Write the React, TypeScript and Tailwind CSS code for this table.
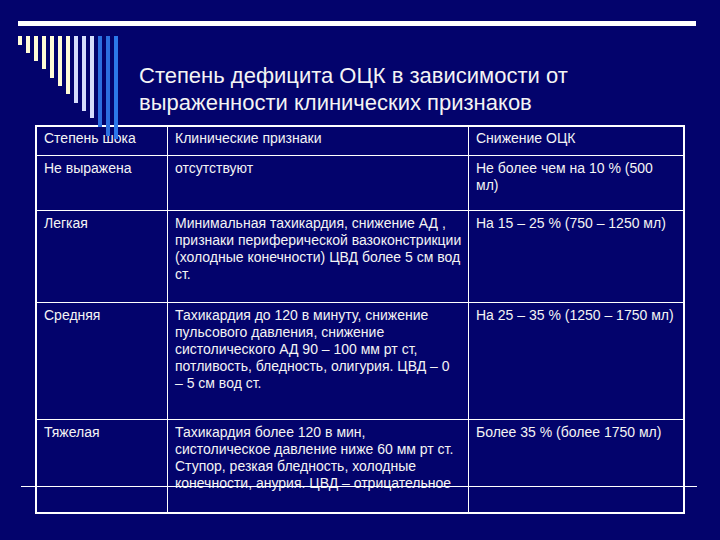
const bars = [
  'h-[9px] bg-[#fffbd6]',
  'h-[17px] bg-[#fffbd6]',
  'h-[25px] bg-[#fffbd6]',
  'h-[33px] bg-[#fffbd6]',
  'h-[42px] bg-[#fffbd6]',
  'h-[50px] bg-[#fffbd6]',
  'h-[58px] bg-[#fffbd6]',
  'h-[67px] bg-[#d6dcfb]',
  'h-[75px] bg-[#d6dcfb]',
  'h-[82px] bg-[#d6dcfb]',
  'h-[91px] bg-[#2c6fe0]',
  'h-[100px] bg-[#2c6fe0]',
  'h-[103px] bg-[#2c78ea]',
]

const rows: { h: string; pt: string; cells: string[][] }[] = [
  { h: 'h-[28px]', pt: 'pt-[3px]', cells: [['Степень шока'], ['Клинические признаки'], ['Снижение ОЦК']] },
  {
    h: 'h-[55px] border-t',
    pt: 'pt-[4px]',
    cells: [['Не выражена'], ['отсутствуют'], ['Не более чем на 10 % (500', 'мл)']],
  },
  {
    h: 'h-[92px] border-t',
    pt: 'pt-[4px]',
    cells: [
      ['Легкая'],
      [
        'Минимальная тахикардия, снижение АД ,',
        'признаки периферической вазоконстрикции',
        '(холодные конечности) ЦВД более 5 см вод',
        'ст.',
      ],
      ['На 15 – 25 % (750 – 1250 мл)'],
    ],
  },
  {
    h: 'h-[117px] border-t',
    pt: 'pt-[4px]',
    cells: [
      ['Средняя'],
      [
        'Тахикардия до 120 в минуту, снижение',
        'пульсового давления, снижение',
        'систолического АД 90 – 100 мм рт ст,',
        'потливость, бледность, олигурия. ЦВД – 0',
        '– 5 см вод ст.',
      ],
      ['На 25 – 35 % (1250 – 1750 мл)'],
    ],
  },
  {
    h: 'h-[93px] border-t',
    pt: 'pt-[4px]',
    cells: [
      ['Тяжелая'],
      [
        'Тахикардия более 120 в мин,',
        'систолическое давление ниже 60 мм рт ст.',
        'Ступор, резкая бледность, холодные',
        'конечности, анурия. ЦВД – отрицательное',
      ],
      ['Более 35 % (более 1750 мл)'],
    ],
  },
]

export default function App() {
  return (
    <div
      className="relative w-[720px] h-[540px] overflow-hidden bg-[#03036c] pt-[21px] text-[#f4f4f4]"
      style={{ fontFamily: '"Liberation Sans", Arial, sans-serif' }}
    >
      <div className="ml-[18px] w-[678px] h-[5px] bg-white" />

      <div className="mt-[10px] h-[89px] flex items-start">
        <div className="relative z-10 ml-[18px] flex items-start gap-[4px]">
          {bars.map((b, i) => (
            <div key={i} className={`w-[4px] shrink-0 ${b}`} />
          ))}
        </div>
        <h1 className="ml-[21px] mt-[26px] text-[22px] leading-[27px] font-normal whitespace-nowrap">
          Степень дефицита ОЦК в зависимости от
          <br />
          выраженности клинических признаков
        </h1>
      </div>

      <div className="ml-[35px] w-[650px] border-2 border-white text-[14px] leading-[17px]">
        {rows.map((r, i) => (
          <div key={i} className={`grid grid-cols-[130px_301px_1fr] border-white ${r.h}`}>
            {r.cells.map((lines, j) => (
              <div
                key={j}
                className={`${r.pt} pl-[7px] whitespace-nowrap border-white ${j > 0 ? 'border-l' : ''}`}
              >
                {lines.map((l, k) => (
                  <div key={k}>{l}</div>
                ))}
              </div>
            ))}
          </div>
        ))}
      </div>

      <div className="absolute left-[21px] top-[486px] w-[676px] h-px bg-white" />
    </div>
  )
}
